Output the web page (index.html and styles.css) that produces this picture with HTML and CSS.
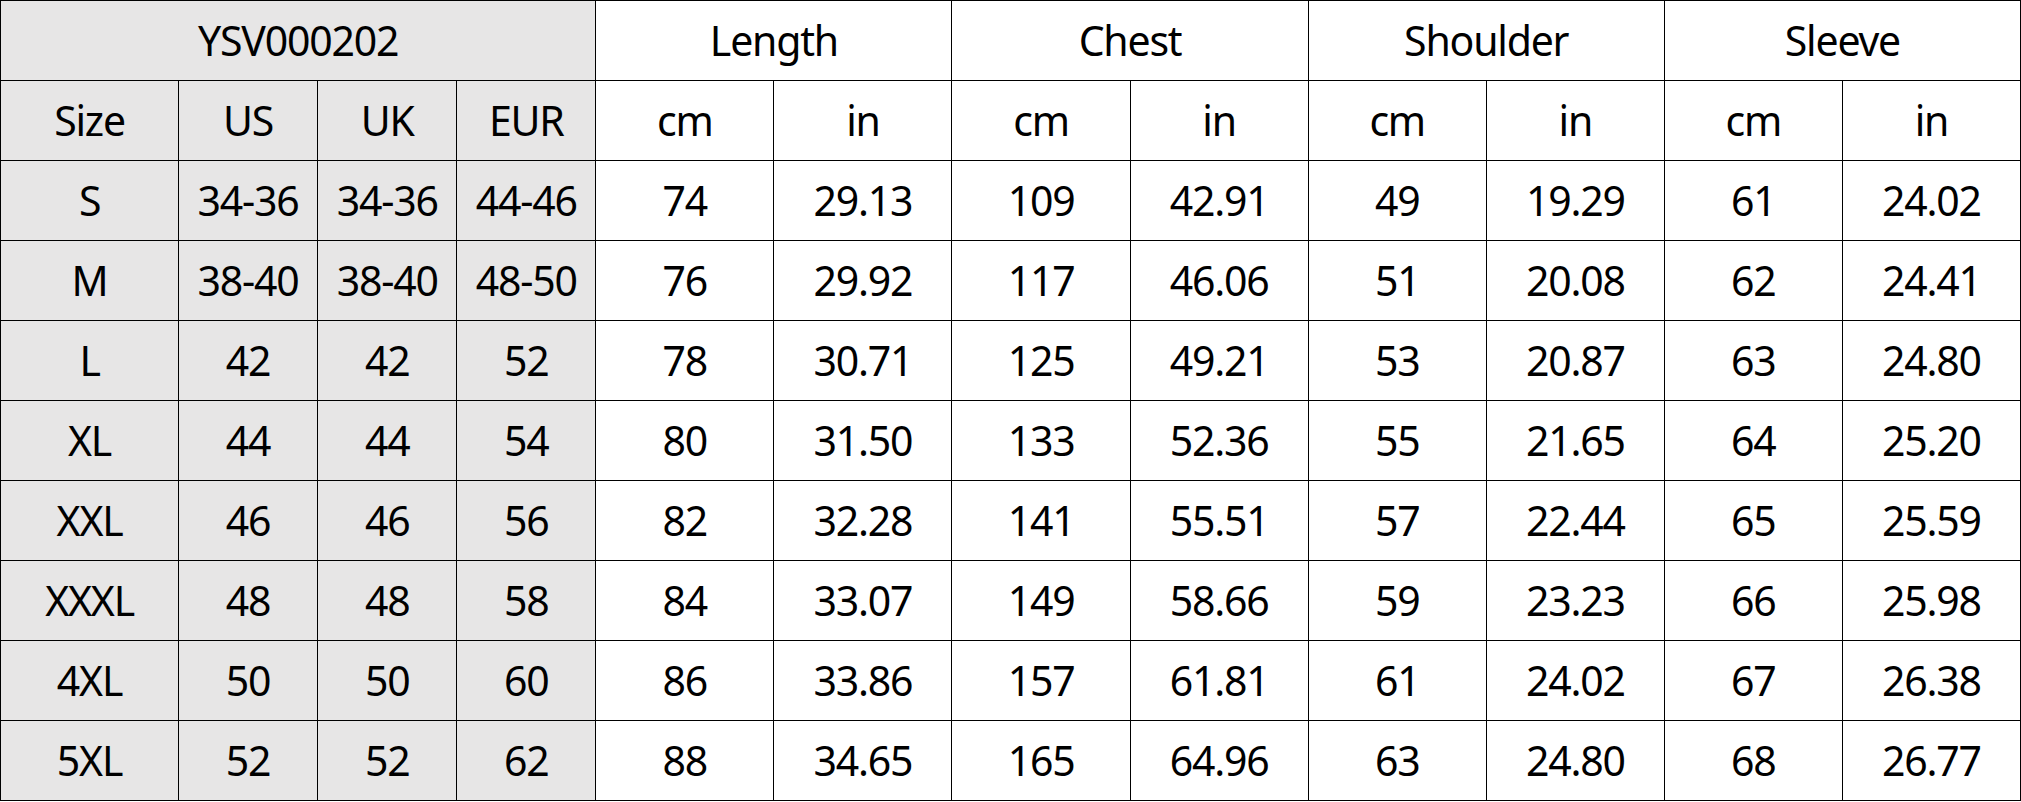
FILE: index.html
```html
<!DOCTYPE html>
<html lang="en">
<head>
<meta charset="utf-8">
<title>YSV000202 Size Chart</title>
<link rel="stylesheet" href="styles.css">
</head>
<body>
<table class="chart">
  <colgroup>
    <col class="c-size"><col class="c-std"><col class="c-std"><col class="c-std">
    <col class="c-data"><col class="c-data"><col class="c-data"><col class="c-data">
    <col class="c-data"><col class="c-data"><col class="c-data"><col class="c-data">
  </colgroup>
  <thead>
    <tr>
      <th class="g" colspan="4">YSV000202</th>
      <th colspan="2">Length</th>
      <th colspan="2">Chest</th>
      <th colspan="2">Shoulder</th>
      <th colspan="2">Sleeve</th>
    </tr>
    <tr>
      <th class="g">Size</th><th class="g">US</th><th class="g">UK</th><th class="g">EUR</th>
      <th>cm</th><th>in</th><th>cm</th><th>in</th><th>cm</th><th>in</th><th>cm</th><th>in</th>
    </tr>
  </thead>
  <tbody>
    <tr><td class="g">S</td><td class="g">34-36</td><td class="g">34-36</td><td class="g">44-46</td><td>74</td><td>29.13</td><td>109</td><td>42.91</td><td>49</td><td>19.29</td><td>61</td><td>24.02</td></tr>
    <tr><td class="g">M</td><td class="g">38-40</td><td class="g">38-40</td><td class="g">48-50</td><td>76</td><td>29.92</td><td>117</td><td>46.06</td><td>51</td><td>20.08</td><td>62</td><td>24.41</td></tr>
    <tr><td class="g">L</td><td class="g">42</td><td class="g">42</td><td class="g">52</td><td>78</td><td>30.71</td><td>125</td><td>49.21</td><td>53</td><td>20.87</td><td>63</td><td>24.80</td></tr>
    <tr><td class="g">XL</td><td class="g">44</td><td class="g">44</td><td class="g">54</td><td>80</td><td>31.50</td><td>133</td><td>52.36</td><td>55</td><td>21.65</td><td>64</td><td>25.20</td></tr>
    <tr><td class="g">XXL</td><td class="g">46</td><td class="g">46</td><td class="g">56</td><td>82</td><td>32.28</td><td>141</td><td>55.51</td><td>57</td><td>22.44</td><td>65</td><td>25.59</td></tr>
    <tr><td class="g">XXXL</td><td class="g">48</td><td class="g">48</td><td class="g">58</td><td>84</td><td>33.07</td><td>149</td><td>58.66</td><td>59</td><td>23.23</td><td>66</td><td>25.98</td></tr>
    <tr><td class="g">4XL</td><td class="g">50</td><td class="g">50</td><td class="g">60</td><td>86</td><td>33.86</td><td>157</td><td>61.81</td><td>61</td><td>24.02</td><td>67</td><td>26.38</td></tr>
    <tr><td class="g">5XL</td><td class="g">52</td><td class="g">52</td><td class="g">62</td><td>88</td><td>34.65</td><td>165</td><td>64.96</td><td>63</td><td>24.80</td><td>68</td><td>26.77</td></tr>
  </tbody>
</table>
</body>
</html>
```
FILE: styles.css
```css
html, body {
  margin: 0;
  padding: 0;
  background: #ffffff;
}

.chart {
  width: 2021px;
  table-layout: fixed;
  border-collapse: collapse;
  font-family: "Noto Sans", "Open Sans", sans-serif;
  font-size: 41px;
  letter-spacing: -1.2px;
  color: #000000;
}

.c-size { width: 178px; }
.c-std { width: 139px; }
.c-data { width: 178px; }

.chart tr {
  height: 80px;
}

.chart th,
.chart td {
  border: 1px solid #000000;
  padding: 0;
  text-align: center;
  vertical-align: middle;
  font-weight: normal;
  white-space: nowrap;
  overflow: hidden;
  line-height: 1.2;
}

.chart .g {
  background: #e7e6e6;
}
```
